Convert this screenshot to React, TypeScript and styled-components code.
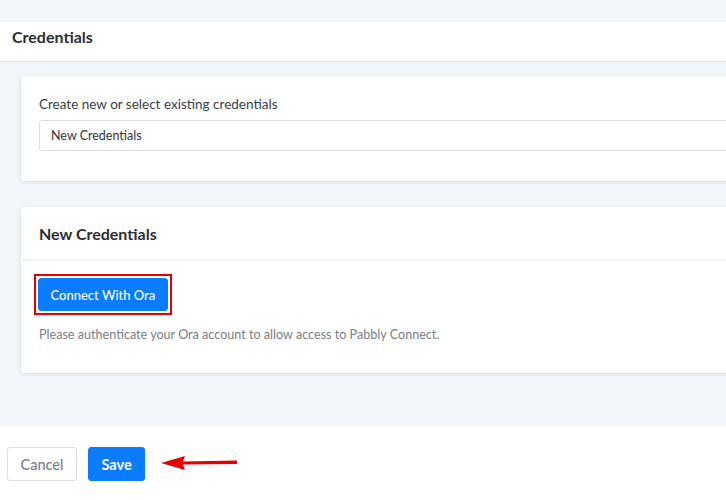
import React from 'react';
import styled, { createGlobalStyle } from 'styled-components';

const GlobalStyle = createGlobalStyle`
	html, body {
		margin: 0;
		padding: 0;
		background: #ffffff;
		font-family: 'Lato', 'Open Sans', sans-serif;
		overflow: hidden;
	}
	* {
		box-sizing: border-box;
	}
`;

const App: React.FC = () => (
	<>
		<GlobalStyle />
		<Page>
			<TopStrip />
			<Header>
				<HeaderTitle>Credentials</HeaderTitle>
			</Header>
			<Body>
				<Card>
					<CardBody pad="20px 18px 30px">
						<Label>Create new or select existing credentials</Label>
						<Input>New Credentials</Input>
					</CardBody>
				</Card>
				<Card>
					<CardHeader>
						<CardTitle>New Credentials</CardTitle>
					</CardHeader>
					<CardBody pad="13px 18px 31px 13px">
						<Highlight>
							<Button variant="primary" size="md">
								Connect With Ora
							</Button>
						</Highlight>
						<HelpText>Please authenticate your Ora account to allow access to Pabbly Connect.</HelpText>
					</CardBody>
				</Card>
			</Body>
			<Footer>
				<Button variant="outline" size="lg">
					Cancel
				</Button>
				<Button variant="primary" size="lg">
					Save
				</Button>
				<Arrow width="78" height="16" viewBox="0 0 78 16">
					<polygon points="0,8 24,1 22,6.5 76,5.5 76,9 22,9.5 24,15" fill="#e60000" />
				</Arrow>
			</Footer>
		</Page>
	</>
);

export default App;

const Page = styled.div`
	width: 100%;
	height: 500px;
	display: flex;
	flex-direction: column;
	background: #ffffff;
	overflow: hidden;
`;

const TopStrip = styled.div`
	height: 22px;
	flex-shrink: 0;
	background: #f2f5f9;
`;

const Header = styled.div`
	height: 40px;
	flex-shrink: 0;
	display: flex;
	align-items: flex-start;
	padding: 5px 12px 0;
	background: #ffffff;
	border-bottom: 1px solid #dbe5f2;
`;

const HeaderTitle = styled.h2`
	margin: 0;
	font-size: 16px;
	line-height: 20px;
	font-weight: 700;
	color: #2b2d33;
`;

const Body = styled.div`
	background: #f2f5f9;
	padding: 14px 0 53px 21px;
	margin-right: -40px;
	display: flex;
	flex-direction: column;
	gap: 26px;
`;

const Card = styled.div`
	background: #ffffff;
	border-radius: 4px;
	box-shadow: 0 1px 4px rgba(30, 45, 70, 0.12);
`;

const CardHeader = styled.div`
	height: 54px;
	display: flex;
	align-items: center;
	padding: 0 18px;
	border-bottom: 2px solid #f1f5fb;
`;

const CardTitle = styled.h3`
	margin: 0;
	font-size: 16px;
	font-weight: 700;
	color: #2b2d33;
`;

const CardBody = styled.div<{ pad: string }>`
	padding: ${({ pad }) => pad};
	display: flex;
	flex-direction: column;
	align-items: flex-start;
`;

const Label = styled.div`
	font-size: 13.5px;
	color: #3a3d45;
	line-height: 16px;
	margin-bottom: 8px;
`;

const Input = styled.div`
	width: 100%;
	height: 31px;
	display: flex;
	align-items: center;
	padding: 0 11px;
	border: 1px solid #dcdfe4;
	border-radius: 3px;
	font-size: 12.5px;
	color: #2f3238;
`;

const Highlight = styled.div`
	border: 2px solid #e60000;
	padding: 2px;
`;

const Button = styled.button<{ variant: 'primary' | 'outline'; size: 'md' | 'lg' }>`
	font-family: inherit;
	font-weight: ${({ size }) => (size === 'lg' ? 700 : 500)};
	font-size: ${({ size }) => (size === 'lg' ? '14.5px' : '13px')};
	height: ${({ size }) => (size === 'lg' ? '34px' : '33px')};
	padding: ${({ size }) => (size === 'lg' ? '0 12.5px' : '0 11.5px')};
	border-radius: 3px;
	cursor: pointer;
	${({ variant }) =>
		variant === 'primary'
			? `background: #0a7cff;
			   color: #ffffff;
			   border: 1px solid #0a7cff;`
			: `background: #ffffff;
			   color: #7b7f87;
			   font-weight: 500;
			   border: 1px solid #dcdfe4;`}
`;

const HelpText = styled.div`
	margin-top: 12px;
	margin-left: 5px;
	font-size: 12.6px;
	color: #7a7e86;
`;

const Footer = styled.div`
	display: flex;
	align-items: center;
	gap: 11px;
	padding: 21px 7px;
`;

const Arrow = styled.svg`
	margin-left: 5px;
	margin-top: -2px;
`;
